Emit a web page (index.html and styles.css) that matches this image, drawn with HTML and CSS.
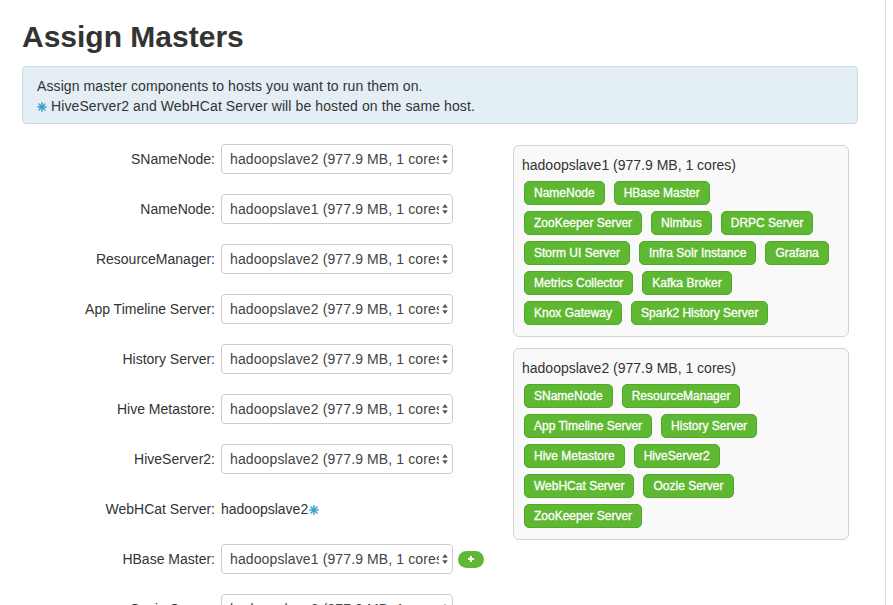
FILE: index.html
```html
<!DOCTYPE html>
<html>
<head>
<meta charset="utf-8">
<link rel="stylesheet" href="styles.css">
</head>
<body>
<div class="page">
  <h2 class="title">Assign Masters</h2>
  <div class="alert">
    <div>Assign master components to hosts you want to run them on.</div>
    <div><svg class="star" viewBox="0 0 10 10"><g stroke="#3a9fc8" stroke-width="1.5" stroke-linecap="round"><line x1="5" y1="0.8" x2="5" y2="9.2"/><line x1="0.8" y1="5" x2="9.2" y2="5"/><line x1="2" y1="2" x2="8" y2="8"/><line x1="8" y1="2" x2="2" y2="8"/></g></svg> HiveServer2 and WebHCat Server will be hosted on the same host.</div>
  </div>
  <div class="content">
    <div class="form">
      <div class="row"><label class="lbl">SNameNode:</label><div class="select"><span class="val">hadoopslave2 (977.9 MB, 1 cores)</span><svg class="arr" viewBox="0 0 6 11"><path d="M3 0L6 4H0z M3 11L0 7H6z" fill="#555"/></svg></div></div>
      <div class="row"><label class="lbl">NameNode:</label><div class="select"><span class="val">hadoopslave1 (977.9 MB, 1 cores)</span><svg class="arr" viewBox="0 0 6 11"><path d="M3 0L6 4H0z M3 11L0 7H6z" fill="#555"/></svg></div></div>
      <div class="row"><label class="lbl">ResourceManager:</label><div class="select"><span class="val">hadoopslave2 (977.9 MB, 1 cores)</span><svg class="arr" viewBox="0 0 6 11"><path d="M3 0L6 4H0z M3 11L0 7H6z" fill="#555"/></svg></div></div>
      <div class="row"><label class="lbl">App Timeline Server:</label><div class="select"><span class="val">hadoopslave2 (977.9 MB, 1 cores)</span><svg class="arr" viewBox="0 0 6 11"><path d="M3 0L6 4H0z M3 11L0 7H6z" fill="#555"/></svg></div></div>
      <div class="row"><label class="lbl">History Server:</label><div class="select"><span class="val">hadoopslave2 (977.9 MB, 1 cores)</span><svg class="arr" viewBox="0 0 6 11"><path d="M3 0L6 4H0z M3 11L0 7H6z" fill="#555"/></svg></div></div>
      <div class="row"><label class="lbl">Hive Metastore:</label><div class="select"><span class="val">hadoopslave2 (977.9 MB, 1 cores)</span><svg class="arr" viewBox="0 0 6 11"><path d="M3 0L6 4H0z M3 11L0 7H6z" fill="#555"/></svg></div></div>
      <div class="row"><label class="lbl">HiveServer2:</label><div class="select"><span class="val">hadoopslave2 (977.9 MB, 1 cores)</span><svg class="arr" viewBox="0 0 6 11"><path d="M3 0L6 4H0z M3 11L0 7H6z" fill="#555"/></svg></div></div>
      <div class="row"><label class="lbl">WebHCat Server:</label><span class="static">hadoopslave2<svg class="star" viewBox="0 0 10 10"><g stroke="#3a9fc8" stroke-width="1.5" stroke-linecap="round"><line x1="5" y1="0.8" x2="5" y2="9.2"/><line x1="0.8" y1="5" x2="9.2" y2="5"/><line x1="2" y1="2" x2="8" y2="8"/><line x1="8" y1="2" x2="2" y2="8"/></g></svg></span></div>
      <div class="row"><label class="lbl">HBase Master:</label><div class="select"><span class="val">hadoopslave1 (977.9 MB, 1 cores)</span><svg class="arr" viewBox="0 0 6 11"><path d="M3 0L6 4H0z M3 11L0 7H6z" fill="#555"/></svg></div><span class="plus"><svg viewBox="0 0 8 8" width="8" height="8"><path d="M4 1V7M1 4H7" stroke="#fff" stroke-width="2"/></svg></span></div>
      <div class="row"><label class="lbl">Oozie Server:</label><div class="select"><span class="val">hadoopslave2 (977.9 MB, 1 cores)</span><svg class="arr" viewBox="0 0 6 11"><path d="M3 0L6 4H0z M3 11L0 7H6z" fill="#555"/></svg></div></div>
    </div>
    <div class="hosts">
      <div class="panel">
        <div class="host">hadoopslave1 (977.9 MB, 1 cores)</div>
        <div class="brow"><span class="badge">NameNode</span><span class="badge">HBase Master</span></div>
        <div class="brow"><span class="badge">ZooKeeper Server</span><span class="badge">Nimbus</span><span class="badge">DRPC Server</span></div>
        <div class="brow"><span class="badge">Storm UI Server</span><span class="badge">Infra Solr Instance</span><span class="badge">Grafana</span></div>
        <div class="brow"><span class="badge">Metrics Collector</span><span class="badge">Kafka Broker</span></div>
        <div class="brow"><span class="badge">Knox Gateway</span><span class="badge">Spark2 History Server</span></div>
      </div>
      <div class="panel">
        <div class="host">hadoopslave2 (977.9 MB, 1 cores)</div>
        <div class="brow"><span class="badge">SNameNode</span><span class="badge">ResourceManager</span></div>
        <div class="brow"><span class="badge">App Timeline Server</span><span class="badge">History Server</span></div>
        <div class="brow"><span class="badge">Hive Metastore</span><span class="badge">HiveServer2</span></div>
        <div class="brow"><span class="badge">WebHCat Server</span><span class="badge">Oozie Server</span></div>
        <div class="brow"><span class="badge">ZooKeeper Server</span></div>
      </div>
    </div>
  </div>
</div>
</body>
</html>
```

FILE: styles.css
```css
html, body {
  margin: 0;
  padding: 0;
  background: #fff;
}
body {
  font-family: "Liberation Sans", Arial, sans-serif;
  font-size: 14px;
  line-height: 20px;
  color: #333;
}
.page {
  width: 886px;
  min-height: 700px;
  box-sizing: border-box;
  border-right: 1px solid #dcdcdc;
  padding: 20px 27px 0 22px;
}
.title {
  margin: 0;
  font-size: 30px;
  line-height: 33px;
  font-weight: bold;
  color: #333;
}
.alert {
  margin-top: 13px;
  background: #e3eff5;
  border: 1px solid #c8dce5;
  border-radius: 4px;
  padding: 9px 14px 7px 14px;
  color: #333;
  letter-spacing: 0.1px;
}
.star {
  width: 10px;
  height: 10px;
  vertical-align: -0.5px;
}
.content {
  margin-top: 20px;
  display: grid;
  grid-template-columns: 491px 336px;
  align-items: start;
}
.form {
  display: flex;
  flex-direction: column;
}
.row {
  display: flex;
  align-items: center;
  height: 30px;
  margin-bottom: 20px;
}
.lbl {
  width: 193px;
  margin-right: 6px;
  text-align: right;
  flex: none;
}
.select {
  width: 232px;
  height: 30px;
  box-sizing: border-box;
  border: 1px solid #ccc;
  border-radius: 4px;
  background: #fff;
  display: flex;
  align-items: center;
  padding: 0 4px 0 8px;
  color: #444;
}
.val {
  flex: 1;
  overflow: hidden;
  white-space: nowrap;
  letter-spacing: 0.12px;
}
.arr {
  width: 6px;
  height: 10px;
  margin-left: 3px;
  flex: none;
}
.static {
  color: #333;
}
.static .star {
  margin-left: 1px;
}
.plus {
  margin-left: 5px;
  width: 26px;
  height: 17px;
  border-radius: 9px;
  background: #5fb832;
  display: flex;
  align-items: center;
  justify-content: center;
}
.hosts {
  margin-top: 1px;
  display: flex;
  flex-direction: column;
  gap: 11px;
}
.panel {
  border: 1px solid #d3d3d3;
  border-radius: 6px;
  background: #f9f9f9;
  padding: 9px 8px 5px 8px;
}
.host {
  margin-bottom: 6px;
  color: #333;
}
.brow {
  display: flex;
  gap: 9px;
  margin: 0 0 6px 2px;
}
.badge {
  height: 24px;
  box-sizing: border-box;
  display: inline-flex;
  align-items: center;
  padding: 0 9px;
  background: #5fb832;
  border: 1px solid #52a829;
  border-radius: 5px;
  color: #fff;
  font-size: 12px;
  white-space: nowrap;
  -webkit-text-stroke: 0.3px #fff;
}
```
